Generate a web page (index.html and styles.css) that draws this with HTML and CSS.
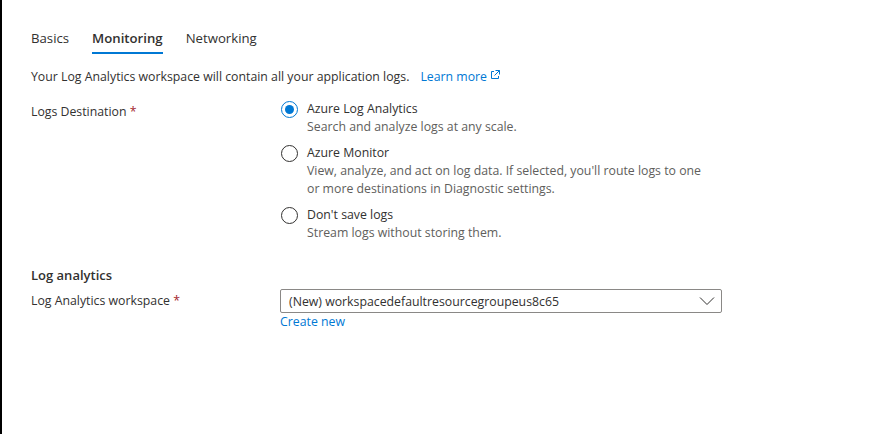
FILE: index.html
```html
<!DOCTYPE html>
<html lang="en">
<head>
<meta charset="utf-8">
<title>Monitoring</title>
<link rel="stylesheet" href="styles.css">
</head>
<body>
<div class="page">
  <nav class="tabs">
    <span class="tab">Basics</span>
    <span class="tab active">Monitoring</span>
    <span class="tab">Networking</span>
  </nav>
  <p class="intro">Your Log Analytics workspace will contain all your application logs.<a class="link learn" href="#">Learn more<svg class="ext" width="10" height="10" viewBox="0 0 10 10"><path d="M4 1.5H1.5v7h7V6" fill="none" stroke="#0078d4" stroke-width="1"/><path d="M5.5 0.5h4v4M9.5 0.5L4.5 5.5" fill="none" stroke="#0078d4" stroke-width="1"/></svg></a></p>

  <div class="row">
    <div class="label label-radio">Logs Destination <span class="req">*</span></div>
    <div class="field options">
      <div class="option">
        <span class="radio checked"></span>
        <div class="opt-text">
          <div class="opt-title">Azure Log Analytics</div>
          <div class="opt-desc">Search and analyze logs at any scale.</div>
        </div>
      </div>
      <div class="option">
        <span class="radio"></span>
        <div class="opt-text">
          <div class="opt-title">Azure Monitor</div>
          <div class="opt-desc">View, analyze, and act on log data. If selected, you'll route logs to one<br>or more destinations in Diagnostic settings.</div>
        </div>
      </div>
      <div class="option">
        <span class="radio"></span>
        <div class="opt-text">
          <div class="opt-title">Don't save logs</div>
          <div class="opt-desc">Stream logs without storing them.</div>
        </div>
      </div>
    </div>
  </div>

  <h2 class="section">Log analytics</h2>
  <div class="row row-select">
    <div class="label label-select">Log Analytics workspace <span class="req">*</span></div>
    <div class="field">
      <div class="select">
        <span class="select-text">(New) workspacedefaultresourcegroupeus8c65</span>
        <svg class="chev" width="16" height="10" viewBox="0 0 16 10"><path d="M1 1.5l7 7 7-7" fill="none" stroke="#323130" stroke-width="1"/></svg>
      </div>
      <a class="link create" href="#">Create new</a>
    </div>
  </div>
</div>
</body>
</html>
```

FILE: styles.css
```css
html, body {
  margin: 0;
  padding: 0;
  background: #ffffff;
}
body {
  font-family: "Segoe UI", "Open Sans", "Noto Sans", sans-serif;
  font-size: 12.3px;
  color: #323130;
}
.page {
  box-sizing: border-box;
  height: 100vh;
  border-left: 2px solid #000000;
  padding: 28px 0 0 29px;
}
.tabs {
  display: flex;
  gap: 23px;
}
.tab {
  font-size: 13.2px;
  line-height: 20px;
  padding-bottom: 4px;
  border-bottom: 2px solid transparent;
  color: #323130;
}
.tab.active {
  font-weight: 600;
  border-bottom-color: #0078d4;
}
.intro {
  margin: 13px 0 0 0;
  line-height: 20px;
}
.link {
  color: #0078d4;
  text-decoration: none;
}
.learn {
  margin-left: 11px;
}
.ext {
  margin-left: 3px;
  vertical-align: 1px;
}
.row {
  display: flex;
  margin-top: 12px;
}
.label {
  width: 249px;
  flex: none;
}
.label-radio {
  padding-top: 4px;
  line-height: 18px;
}
.req {
  color: #a4262c;
}
.options {
  display: flex;
  flex-direction: column;
  gap: 8px;
  padding-top: 1px;
}
.option {
  display: flex;
  gap: 9px;
  line-height: 18px;
}
.radio {
  box-sizing: border-box;
  width: 17px;
  height: 17px;
  margin-left: 1px;
  margin-top: 1px;
  border: 1px solid #323130;
  border-radius: 50%;
  flex: none;
  display: flex;
  align-items: center;
  justify-content: center;
}
.radio.checked {
  border-color: #0078d4;
}
.radio.checked::after {
  content: "";
  width: 9px;
  height: 9px;
  border-radius: 50%;
  background: #0078d4;
}
.opt-desc {
  color: #605e5c;
}
.section {
  margin: 23px 0 0 0;
  font-size: 13px;
  font-weight: 600;
  line-height: 20px;
}
.row-select {
  margin-top: 4px;
}
.label-select {
  line-height: 24px;
}
.select {
  box-sizing: border-box;
  width: 442px;
  height: 24px;
  border: 1px solid #8a8886;
  border-radius: 2px;
  display: flex;
  align-items: center;
  justify-content: space-between;
  padding: 0 6px 0 8px;
}
.chev {
  flex: none;
}
.create {
  display: block;
  line-height: 18px;
  margin-top: 0;
}
```
